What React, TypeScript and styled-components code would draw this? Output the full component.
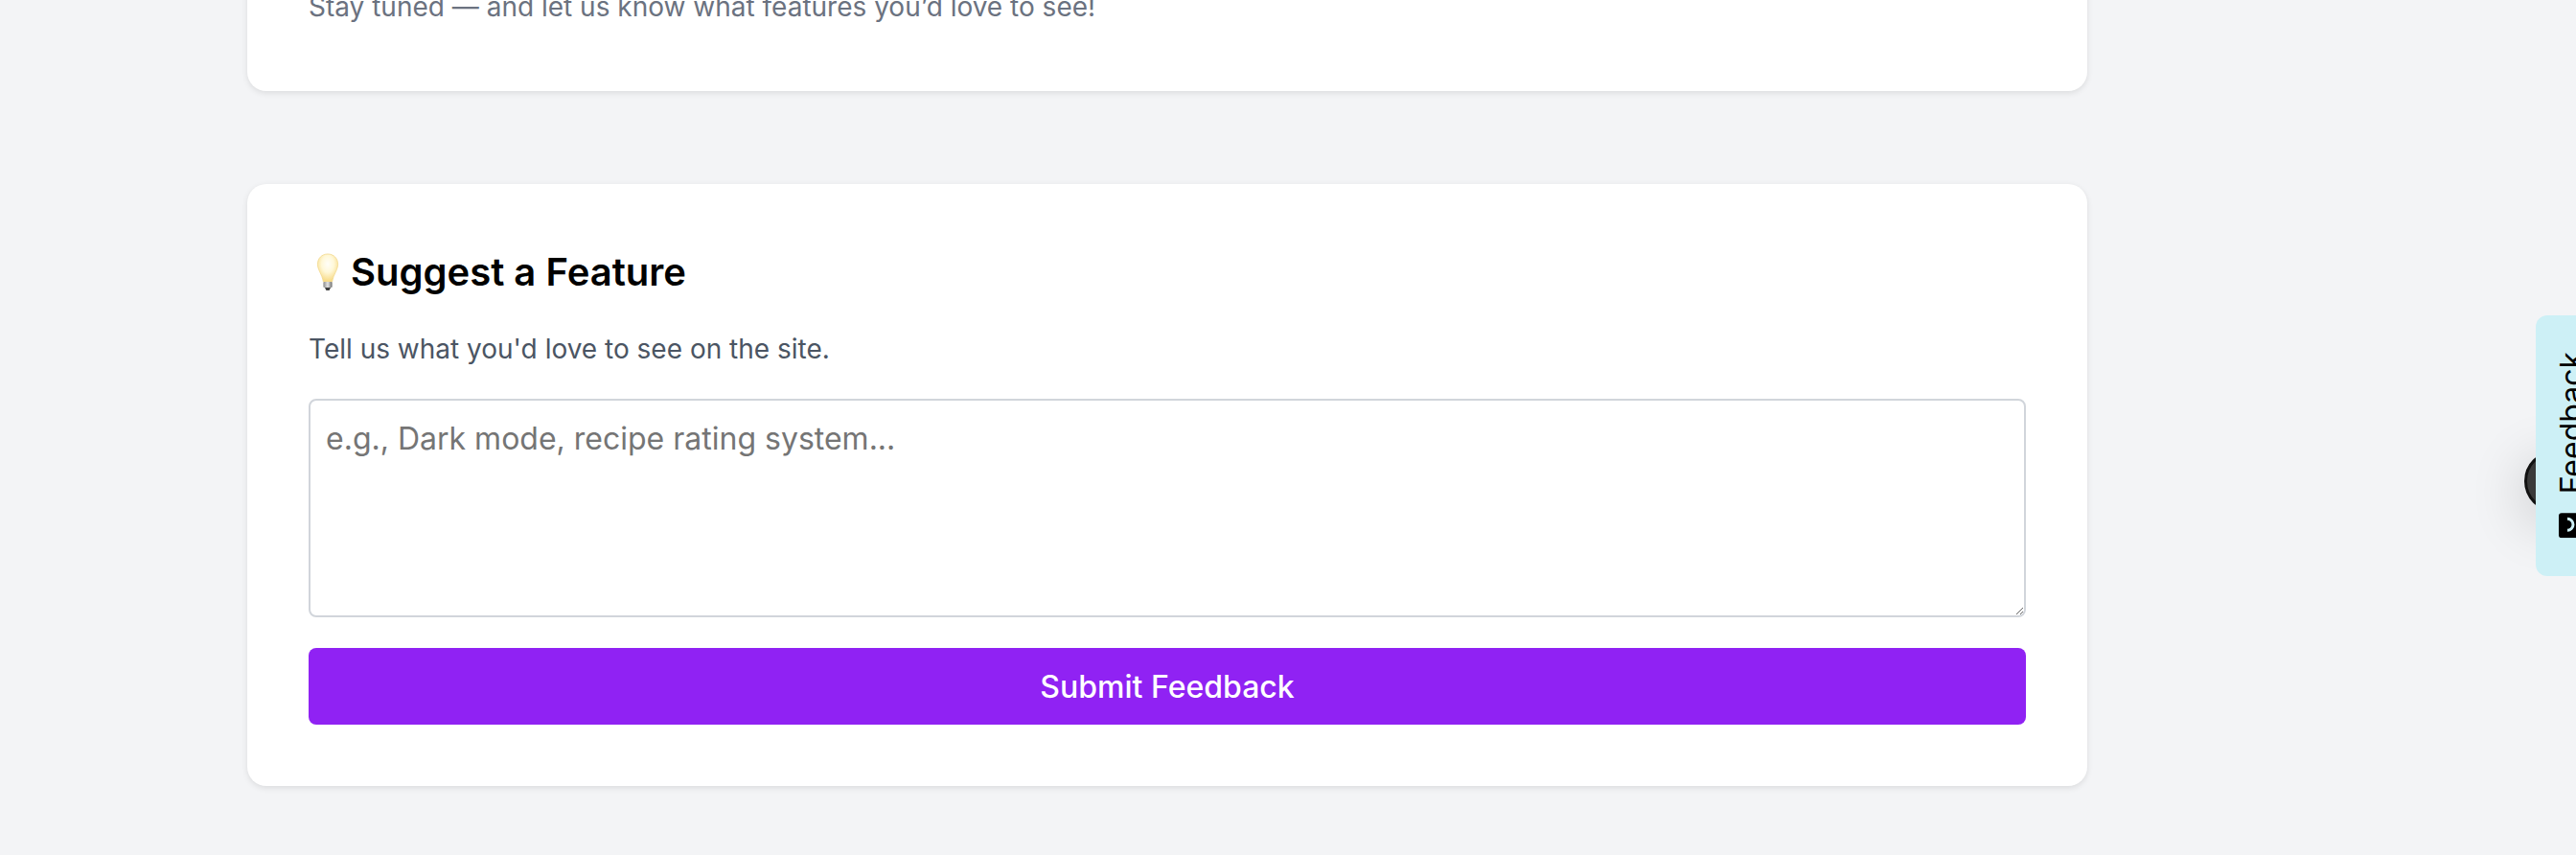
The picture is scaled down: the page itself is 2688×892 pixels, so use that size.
import styled, { createGlobalStyle } from "styled-components";

const GlobalStyle = createGlobalStyle`
  html, body {
    margin: 0;
    height: 892px;
    overflow: hidden;
    background: #f3f4f6;
    font-family: Inter, "Liberation Sans", sans-serif;
  }
  * {
    box-sizing: border-box;
  }
`;

const Bulb = () => (
  <BulbSvg viewBox="0 0 24 40" aria-hidden="true">
    <defs>
      <radialGradient id="glow" cx="50%" cy="36%" r="60%">
        <stop offset="0%" stopColor="#fffef8" />
        <stop offset="50%" stopColor="#fff8d8" />
        <stop offset="100%" stopColor="#f8dc8a" />
      </radialGradient>
      <linearGradient id="base" x1="0" x2="1" y1="0" y2="0">
        <stop offset="0%" stopColor="#8a8a8a" />
        <stop offset="50%" stopColor="#e4e4e4" />
        <stop offset="100%" stopColor="#6e6e6e" />
      </linearGradient>
    </defs>
    <path
      d="M12 1C5.8 1 1.4 5.6 1.4 11.6c0 6 4.4 10 6 18.4h9.2c1.6-8.4 6-12.4 6-18.4C22.6 5.6 18.2 1 12 1z"
      fill="url(#glow)"
      stroke="#f3d98f"
      strokeWidth="0.8"
    />
    <rect x="7.4" y="30" width="9.2" height="6" rx="1" fill="url(#base)" />
    <path d="M9 36h6l-1.4 3h-3.2z" fill="#3f3f3f" />
  </BulbSvg>
);

const App = () => {
  return (
    <>
      <GlobalStyle />
      <Page>
        <IntroCard>
          <IntroText>Stay tuned — and let us know what features you’d love to see!</IntroText>
        </IntroCard>
        <Card>
          <Title>
            <Bulb />
            Suggest a Feature
          </Title>
          <Lead>Tell us what you'd love to see on the site.</Lead>
          <Input placeholder="e.g., Dark mode, recipe rating system..." />
          <Submit type="button">Submit Feedback</Submit>
        </Card>
      </Page>
      <Avatar />
      <FeedbackTab>
        <TabInner>
          <TabIcon viewBox="0 0 28 28" aria-hidden="true">
            <path
              d="M3 0h20a3 3 0 0 1 3 3v17a3 3 0 0 1-3 3H6l-6 5V3a3 3 0 0 1 3-3z"
              fill="#000"
            />
            <path d="M8 9a6 6 0 0 0 12 0" fill="none" stroke="#cdf0f6" strokeWidth="3" />
          </TabIcon>
          Feedback
        </TabInner>
      </FeedbackTab>
    </>
  );
};

export default App;

const Page = styled.main`
  width: 1920px;
  margin-left: 258px;
  margin-top: -40px;
  display: flex;
  flex-direction: column;
  gap: 97px;
`;

const IntroCard = styled.section`
  background: #fff;
  border-radius: 0 0 20px 20px;
  box-shadow: 0 2px 6px rgba(0, 0, 0, 0.1);
  padding: 24px 64px 64px;
`;

const IntroText = styled.p`
  margin: 0;
  color: #6b7280;
  font-size: 28px;
  line-height: 47px;
`;

const Card = styled.section`
  background: #fff;
  border-radius: 20px;
  box-shadow: 0 2px 6px rgba(0, 0, 0, 0.1);
  padding: 64px;
`;

const Title = styled.h2`
  margin: 0 0 32px;
  display: flex;
  align-items: center;
  gap: 12px;
  color: #000;
  font-size: 40px;
  line-height: 56px;
  font-weight: 600;
`;

const BulbSvg = styled.svg`
  width: 24px;
  height: 40px;
  margin-left: 8px;
`;

const Lead = styled.p`
  margin: 0 0 32px;
  color: #4b5563;
  font-size: 28px;
  line-height: 40px;
`;

const Input = styled.textarea`
  display: block;
  width: 100%;
  height: 228px;
  padding: 16px;
  border: 2px solid #d1d5db;
  border-radius: 8px;
  font-family: inherit;
  font-size: 32px;
  line-height: 48px;
  color: #111827;
  outline: none;
  margin-bottom: 32px;

  &::placeholder {
    color: #757575;
  }
`;

const Submit = styled.button`
  display: block;
  width: 100%;
  height: 80px;
  border: none;
  border-radius: 8px;
  background: #9022f3;
  color: #fff;
  font-family: inherit;
  font-size: 32px;
  font-weight: 500;
`;

const Avatar = styled.div`
  position: fixed;
  left: 2634px;
  top: 470px;
  width: 64px;
  height: 64px;
  border-radius: 50%;
  background: #3a3a3a;
  border: 3px solid #111;
  box-shadow: 0 12px 60px rgba(0, 0, 0, 0.2);
`;

const FeedbackTab = styled.aside`
  position: fixed;
  left: 2646px;
  top: 329px;
  width: 80px;
  height: 272px;
  background: #cdf0f6;
  border-radius: 12px 0 0 12px;
`;

const TabInner = styled.div`
  position: absolute;
  left: 22px;
  bottom: 40px;
  display: flex;
  align-items: center;
  gap: 18px;
  writing-mode: vertical-rl;
  transform: rotate(180deg);
  font-size: 32px;
  line-height: 32px;
  color: #000;
`;

const TabIcon = styled.svg`
  width: 28px;
  height: 28px;
  transform: rotate(90deg);
`;
